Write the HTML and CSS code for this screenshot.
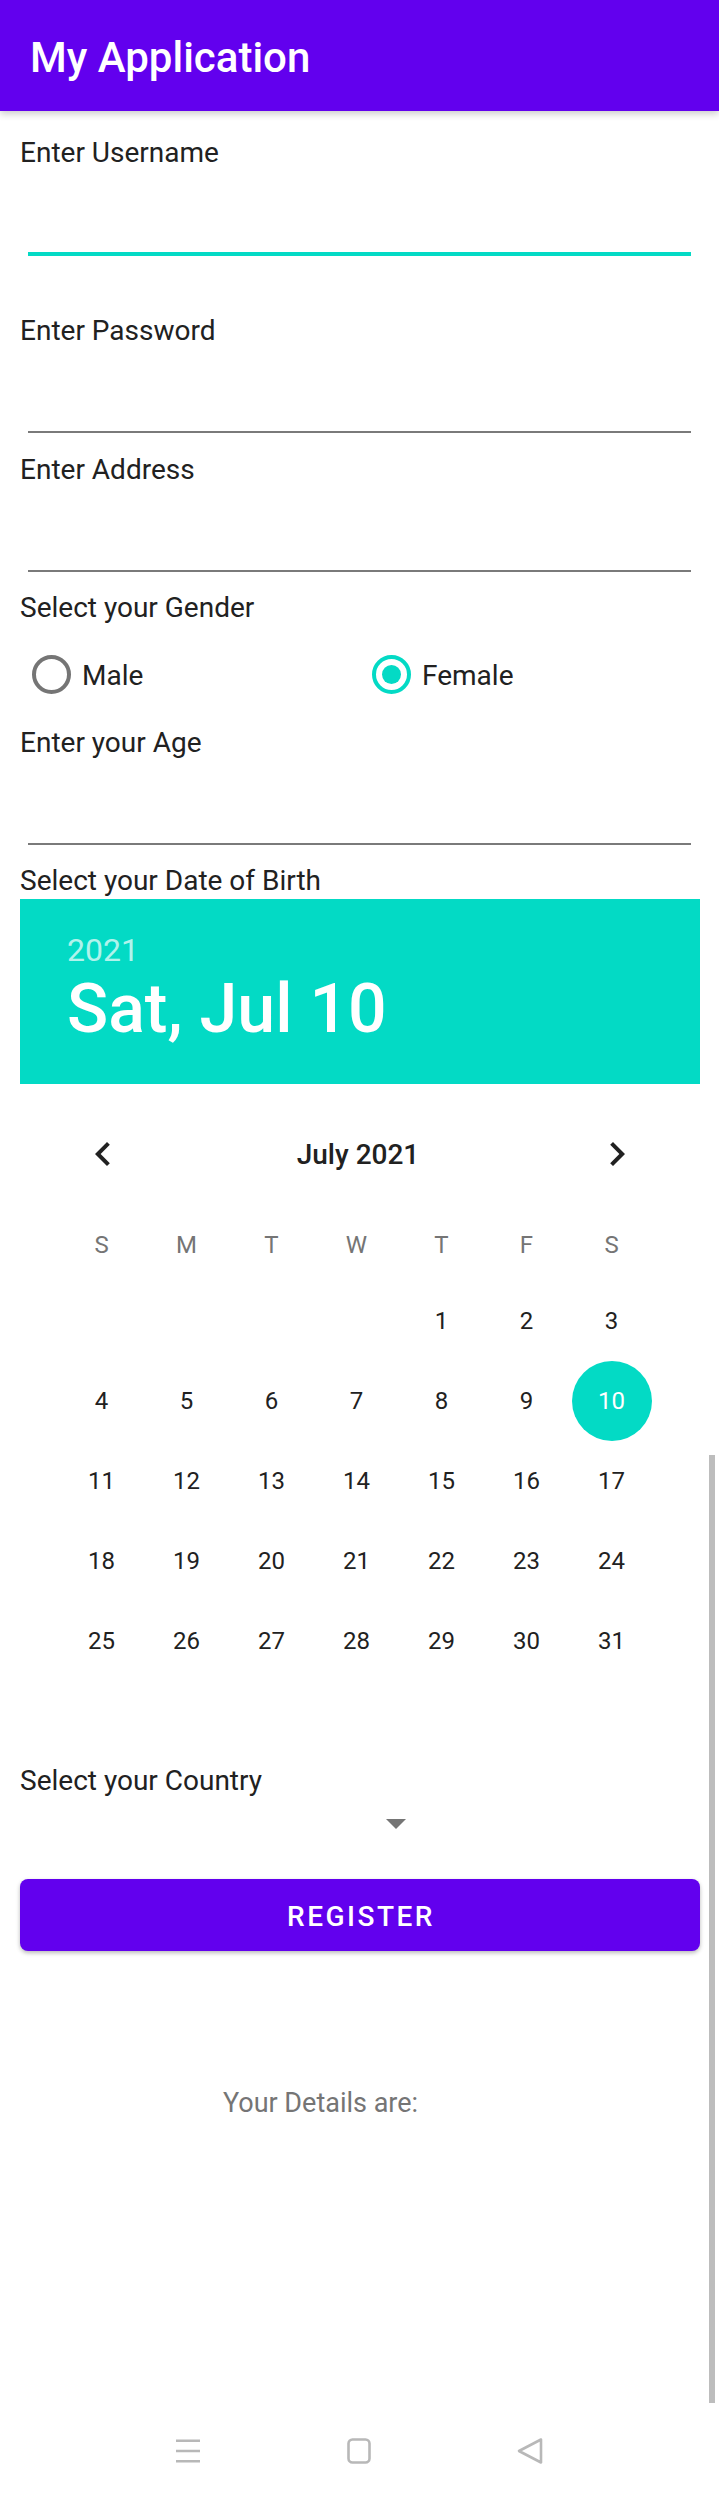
FILE: index.html
```html
<!DOCTYPE html>
<html lang="en">
<head>
<meta charset="utf-8">
<title>My Application</title>
<link rel="stylesheet" href="styles.css">
</head>
<body>
<div class="screen">
  <header class="appbar">
    <h1 class="title">My Application</h1>
  </header>

  <main class="form">
    <div class="label">Enter Username</div>
    <div class="field field-focused"></div>

    <div class="label">Enter Password</div>
    <div class="field field-gap20"></div>

    <div class="label">Enter Address</div>
    <div class="field"></div>

    <div class="label">Select your Gender</div>
    <div class="radio-group">
      <div class="radio"><span class="ring"></span><span class="radio-text">Male</span></div>
      <div class="radio"><span class="ring ring-checked"></span><span class="radio-text">Female</span></div>
    </div>

    <div class="label">Enter your Age</div>
    <div class="field"></div>

    <div class="label label-tight">Select your Date of Birth</div>
    <section class="calendar">
      <div class="cal-header">
        <div class="cal-year">2021</div>
        <div class="cal-date">Sat, Jul 10</div>
      </div>
      <div class="cal-body">
        <div class="month-row">
          <svg class="chev" width="48" height="48" viewBox="0 0 24 24"><path d="M15.41 7.41L14 6l-6 6 6 6 1.41-1.41L10.83 12z"/></svg>
          <span class="month-title">July 2021</span>
          <svg class="chev" width="48" height="48" viewBox="0 0 24 24"><path d="M10 6L8.59 7.41 13.17 12l-4.58 4.59L10 18l6-6z"/></svg>
        </div>
        <div class="grid7 dow-row">
          <span>S</span><span>M</span><span>T</span><span>W</span><span>T</span><span>F</span><span>S</span>
        </div>
        <div class="grid7 days">
          <span class="day"></span><span class="day"></span><span class="day"></span><span class="day"></span>
          <span class="day">1</span><span class="day">2</span><span class="day">3</span>
          <span class="day">4</span><span class="day">5</span><span class="day">6</span><span class="day">7</span>
          <span class="day">8</span><span class="day">9</span><span class="day day-selected"><span class="sel-dot">10</span></span>
          <span class="day">11</span><span class="day">12</span><span class="day">13</span><span class="day">14</span>
          <span class="day">15</span><span class="day">16</span><span class="day">17</span>
          <span class="day">18</span><span class="day">19</span><span class="day">20</span><span class="day">21</span>
          <span class="day">22</span><span class="day">23</span><span class="day">24</span>
          <span class="day">25</span><span class="day">26</span><span class="day">27</span><span class="day">28</span>
          <span class="day">29</span><span class="day">30</span><span class="day">31</span>
        </div>
      </div>
    </section>

    <div class="label label-country">Select your Country</div>
    <div class="spinner"><span class="spinner-arrow"></span></div>

    <button class="register" type="button">REGISTER</button>

    <p class="details">Your Details are:</p>
  </main>

  <nav class="navbar">
    <svg class="nav-icon" width="28" height="28" viewBox="0 0 28 28"><path d="M2 3.7h24M2 14h24M2 24.3h24"/></svg>
    <svg class="nav-icon" width="28" height="28" viewBox="0 0 28 28"><rect x="3.5" y="2.5" width="21" height="23" rx="4"/></svg>
    <svg class="nav-icon" width="28" height="28" viewBox="0 0 28 28"><path d="M25 2.5L3 14l22 11.5z"/></svg>
  </nav>

  <div class="scrollbar"></div>
</div>
</body>
</html>
```

FILE: styles.css
```css
* {
  box-sizing: border-box;
  margin: 0;
  padding: 0;
}

body {
  margin: 0;
  background: #ffffff;
  font-family: Roboto, "Noto Sans", "Liberation Sans", sans-serif;
  color: #212121;
}

.screen {
  position: relative;
  width: 719px;
  height: 2493px;
  display: flex;
  flex-direction: column;
  overflow: hidden;
  background: #ffffff;
}

/* App bar */
.appbar {
  flex: none;
  height: 111px;
  padding: 5px 0 0 30px;
  background: #6200ee;
  box-shadow: 0 3px 7px rgba(0, 0, 0, 0.2);
  position: relative;
  z-index: 1;
}

.title {
  font-size: 42px;
  font-weight: 500;
  line-height: 106px;
  color: #ffffff;
}

/* Form */
.form {
  flex: none;
  padding: 25px 19px 0 20px;
}

.label {
  display: block;
  font-size: 28px;
  line-height: 33px;
  color: #212121;
}

.label-tight {
  margin-bottom: 2px;
}

.label-country {
  margin-top: 83px;
}

.field {
  height: 86px;
  margin: 0 9px 19px 8px;
  border-bottom: 2px solid #7a7a7a;
}

.field-focused {
  height: 87px;
  margin-bottom: 58px;
  border-bottom: 4px solid #03dac5;
}

.field-gap20 {
  margin-bottom: 20px;
}

/* Radio group */
.radio-group {
  display: grid;
  grid-template-columns: 1fr 1fr;
  height: 100px;
  margin-bottom: 2px;
}

.radio {
  display: flex;
  align-items: center;
  gap: 11px;
  padding-left: 12px;
}

.radio-text {
  font-size: 28px;
  line-height: 33px;
  padding-top: 2px;
}

.ring {
  flex: none;
  width: 39px;
  height: 39px;
  border: 4px solid #757575;
  border-radius: 50%;
  display: flex;
  align-items: center;
  justify-content: center;
}

.ring-checked {
  border-color: #03dac5;
}

.ring-checked::after {
  content: "";
  width: 19px;
  height: 19px;
  border-radius: 50%;
  background: #03dac5;
}

/* Calendar */
.calendar {
  width: 680px;
}

.cal-header {
  height: 185px;
  padding: 32px 0 0 47px;
  background: #03dac5;
}

.cal-year {
  font-size: 32px;
  line-height: 38px;
  color: rgba(255, 255, 255, 0.7);
}

.cal-date {
  font-size: 68px;
  font-weight: 500;
  line-height: 80px;
  color: #ffffff;
}

.cal-body {
  padding-top: 30px;
}

.month-row {
  height: 80px;
  display: flex;
  align-items: center;
  justify-content: space-between;
  padding: 0 59px;
}

.chev {
  fill: #212121;
  display: block;
}

.month-title {
  font-size: 28px;
  font-weight: 500;
  margin-left: -4px;
}

.grid7 {
  display: grid;
  grid-template-columns: repeat(7, 1fr);
  width: 595px;
  margin-left: 39px;
  text-align: center;
}

.dow-row {
  margin-top: 11px;
  height: 76px;
  padding-top: 4px;
  font-size: 24px;
  line-height: 72px;
  color: #757575;
}

.days {
  grid-auto-rows: 80px;
  font-size: 24px;
  color: #212121;
}

.day {
  display: flex;
  align-items: center;
  justify-content: center;
}

.sel-dot {
  width: 80px;
  height: 80px;
  border-radius: 50%;
  background: #03dac5;
  color: #ffffff;
  display: flex;
  align-items: center;
  justify-content: center;
}

/* Spinner */
.spinner {
  height: 82px;
  padding: 22px 0 0 366px;
}

.spinner-arrow {
  display: block;
  width: 0;
  height: 0;
  border-left: 10px solid transparent;
  border-right: 10px solid transparent;
  border-top: 10px solid #757575;
}

/* Button */
.register {
  display: block;
  width: 680px;
  height: 72px;
  padding: 3px 0 0 2px;
  border: none;
  border-radius: 8px;
  background: #6200ee;
  box-shadow: 0 2px 4px rgba(0, 0, 0, 0.28);
  font-family: Roboto, "Noto Sans", sans-serif;
  font-size: 28px;
  font-weight: 500;
  line-height: 69px;
  letter-spacing: 2.5px;
  color: #ffffff;
  text-align: center;
}

.details {
  margin-top: 136px;
  padding-right: 79px;
  font-size: 27px;
  line-height: 32px;
  color: #757575;
  text-align: center;
}

/* System navigation bar */
.navbar {
  margin-top: auto;
  height: 84px;
  display: flex;
  align-items: center;
  gap: 143px;
  padding-left: 174px;
}

.nav-icon {
  display: block;
  fill: none;
  stroke: #b8b8b8;
  stroke-width: 2.6;
  stroke-linejoin: round;
  stroke-linecap: butt;
}

/* Scroll indicator overlay */
.scrollbar {
  position: absolute;
  left: 709px;
  top: 1455px;
  width: 6px;
  height: 948px;
  background: #bdbdbd;
}
```
